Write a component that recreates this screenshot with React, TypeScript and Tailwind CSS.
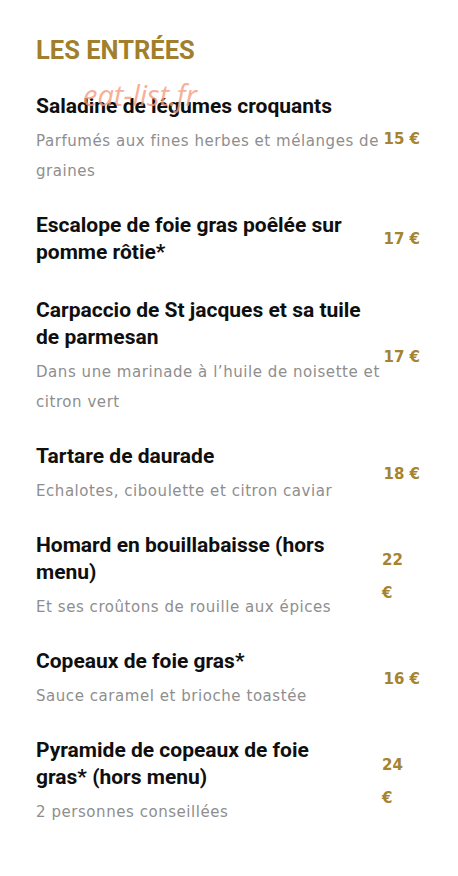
import React from "react";

type Item = {
  title: string[];
  desc?: string[];
  price: string;
  wrapPrice?: boolean;
  extra?: boolean;
};

const items: Item[] = [
  {
    title: ["Saladine de légumes croquants"],
    desc: ["Parfumés aux fines herbes et mélanges de", "graines"],
    price: "15 €",
  },
  {
    title: ["Escalope de foie gras poêlée sur", "pomme rôtie*"],
    price: "17 €",
    extra: true,
  },
  {
    title: ["Carpaccio de St jacques et sa tuile", "de parmesan"],
    desc: ["Dans une marinade à l’huile de noisette et", "citron vert"],
    price: "17 €",
  },
  {
    title: ["Tartare de daurade"],
    desc: ["Echalotes, ciboulette et citron caviar"],
    price: "18 €",
  },
  {
    title: ["Homard en bouillabaisse (hors", "menu)"],
    desc: ["Et ses croûtons de rouille aux épices"],
    price: "22 €",
    wrapPrice: true,
  },
  {
    title: ["Copeaux de foie gras*"],
    desc: ["Sauce caramel et brioche toastée"],
    price: "16 €",
  },
  {
    title: ["Pyramide de copeaux de foie", "gras* (hors menu)"],
    desc: ["2 personnes conseillées"],
    price: "24 €",
    wrapPrice: true,
  },
];

export default function App() {
  return (
    <div className="relative w-[458px] h-[876px] bg-white overflow-hidden">
      <div className="pl-[36px] pt-[35px]">
        <h2 className="font-['Roboto',sans-serif] font-bold text-[25.5px] leading-[30px] text-[#a17f2c]">
          LES ENTRÉES
        </h2>
        <div className="mt-[28px] flex flex-col gap-[26px]">
          {items.map((it, i) => (
            <div key={i} className={`flex items-center ${it.extra ? "pb-[5px]" : ""}`}>
              <div className="w-[346px]">
                <div className="font-['Roboto',sans-serif] font-bold text-[21px] leading-[27px] text-[#0f0f0f]">
                  {it.title.map((t, j) => (
                    <div key={j} className="whitespace-nowrap">{t}</div>
                  ))}
                </div>
                {it.desc && (
                  <div className="mt-[6px] font-['DejaVu_Sans',sans-serif] text-[15px] leading-[30px] tracking-[0.55px] text-[#8e8e8e]">
                    {it.desc.map((t, j) => (
                      <div key={j} className="whitespace-nowrap">{t}</div>
                    ))}
                  </div>
                )}
              </div>
              {it.wrapPrice ? (
                <div className="w-[40px] font-['DejaVu_Sans',sans-serif] font-semibold text-[15px] leading-[33px] text-[#a5832f] text-left">
                  <div>{it.price.split(" ")[0]}</div>
                  <div>€</div>
                </div>
              ) : (
                <div className="w-[38px] font-['DejaVu_Sans',sans-serif] font-semibold text-[15px] leading-[33px] text-[#a5832f] text-right whitespace-nowrap">
                  {it.price}
                </div>
              )}
            </div>
          ))}
        </div>
      </div>
      <div className="absolute left-[83px] top-[78px] font-['Open_Sans',sans-serif] italic text-[29px] leading-[34px] text-[#f49d80] opacity-80 pointer-events-none">
        eat-list.fr
      </div>
    </div>
  );
}
